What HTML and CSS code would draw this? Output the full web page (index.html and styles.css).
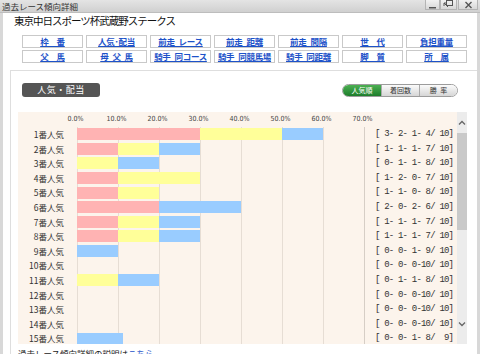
FILE: index.html
```html
<!DOCTYPE html>
<html lang="ja">
<head>
  <meta charset="UTF-8" />
  <title>過去レース傾向詳細</title>
  <link rel="stylesheet" href="styles.css">
</head>
<body>

  <div class="titlebar">
    <span class="titlebar-text">過去レース傾向詳細</span>
    <div class="win-btns">
      <span class="win-btn min">
        <svg width="9" height="8" viewBox="0 0 9 8"><rect x="1" y="6" width="7" height="1.5" fill="#555"/></svg>
      </span>
      <span class="win-btn restore">
        <svg width="11" height="9" viewBox="0 0 11 9" fill="none" stroke="#555" stroke-width="1">
          <rect x="3.5" y="0.5" width="6" height="5"/>
          <path d="M1 3 L5 7 M1 3 L1 6 M1 3 L4 3"/>
        </svg>
      </span>
      <span class="win-btn close">
        <svg width="9" height="8" viewBox="0 0 9 8" stroke="#555" stroke-width="1.4"><path d="M1.5 1 L7.5 7 M7.5 1 L1.5 7"/></svg>
      </span>
    </div>
  </div>

  <div class="window">
    <h1 class="race-name">東京中日スポーツ杯武蔵野ステークス</h1>

    <div class="tabs">
      <a href="#">枠　番</a>
      <a href="#">人気･配当</a>
      <a href="#">前走&ensp;レース</a>
      <a href="#">前走&ensp;距離</a>
      <a href="#">前走&ensp;間隔</a>
      <a href="#">世　代</a>
      <a href="#">負担重量</a>
      <a href="#">父　馬</a>
      <a href="#">母&ensp;父&ensp;馬</a>
      <a href="#">騎手&ensp;同コース</a>
      <a href="#">騎手&ensp;同競馬場</a>
      <a href="#">騎手&ensp;同距離</a>
      <a href="#">脚　質</a>
      <a href="#">所　属</a>
    </div>

    <div class="panel">
      <div class="panel-head">
        <span class="section-label">人気・配当</span>
        <div class="sort-btns">
          <span class="on">人気順</span>
          <span>着回数</span>
          <span>勝&ensp;率</span>
        </div>
      </div>

      <div class="chart-wrap">
        <div class="chart" id="chart">
          <div class="axis">
            <span class="axis-pad"></span>
            <div class="ticks">
              <span>0.0%</span><span>10.0%</span><span>20.0%</span><span>30.0%</span>
              <span>40.0%</span><span>50.0%</span><span>60.0%</span><span>70.0%</span>
            </div>
          </div>
        </div>
        <div class="scrollbar">
          <span class="sb-arrow">
            <svg width="8" height="5" viewBox="0 0 8 5" fill="none" stroke="#666" stroke-width="1.3"><path d="M1 4.5 L4 1.5 L7 4.5"/></svg>
          </span>
          <span class="sb-thumb"></span>
          <span class="sb-track"></span>
          <span class="sb-arrow down">
            <svg width="8" height="5" viewBox="0 0 8 5" fill="none" stroke="#666" stroke-width="1.3"><path d="M1 0.5 L4 3.5 L7 0.5"/></svg>
          </span>
        </div>
      </div>

      <p class="note">過去レース傾向詳細の説明は<a href="#">こちら</a></p>
    </div>
  </div>

  <script>
    // 1着-2着-3着-着外 / 出走数
    var rows = [
      [3, 2, 1, 4, 10], [1, 1, 1, 7, 10], [0, 1, 1, 8, 10], [1, 2, 0, 7, 10],
      [1, 1, 0, 8, 10], [2, 0, 2, 6, 10], [1, 1, 1, 7, 10], [1, 1, 1, 7, 10],
      [0, 0, 1, 9, 10], [0, 0, 0, 10, 10], [0, 1, 1, 8, 10], [0, 0, 0, 10, 10],
      [0, 0, 0, 10, 10], [0, 0, 0, 10, 10], [0, 0, 1, 8, 9]
    ];
    var unit = 4.1; // px per 1%
    var cls = ['win', 'second', 'third'];

    function pad(n, w) {
      var s = String(n);
      while (s.length < w) s = ' ' + s;
      return s;
    }

    var chart = document.getElementById('chart');
    rows.forEach(function (r, i) {
      var row = document.createElement('div');
      row.className = 'row';
      var bars = '';
      for (var k = 0; k < 3; k++) {
        if (r[k] > 0) {
          var w = (r[k] / r[4] * 100 * unit).toFixed(1);
          bars += '<span class="bar ' + cls[k] + '" style="width:' + w + 'px"></span>';
        }
      }
      row.innerHTML =
        '<span class="label">' + (i + 1) + '番人気</span>' +
        '<div class="bars">' + bars + '</div>' +
        '<span class="stats">[' + pad(r[0], 2) + '-' + pad(r[1], 2) + '-' + pad(r[2], 2) + '-' +
        pad(r[3], 2) + '/' + pad(r[4], 3) + ']</span>';
      chart.appendChild(row);
    });
  </script>

</body>
</html>
```

FILE: styles.css
```css
body {
  margin: 0;
  background: #fff;
  color: #222;
  font-family: "Noto Sans CJK JP", sans-serif;
  height: 354px;
  overflow: hidden;
}
.titlebar {
  height: 12px;
  background: linear-gradient(#e4e4e4, #d0d0d0);
  border-bottom: 1px solid #bdbdbd;
  display: flex;
  justify-content: space-between;
}
.titlebar-text {
  font-size: 8.5px;
  line-height: 12px;
  color: #333;
  padding-left: 2px;
}
.win-btns {
  display: flex;
  margin-right: 2px;
}
.win-btn {
  height: 10px;
  display: flex;
  align-items: center;
  justify-content: center;
  background: linear-gradient(#f2f2f2, #d8d8d8);
  border: 1px solid #b4b4b4;
  border-top: none;
  box-sizing: border-box;
}
.win-btn.min { width: 15px; }
.win-btn.restore { width: 17px; }
.win-btn.close { width: 20px; margin-left: 1px; }

.window {
  border-left: 3px solid #d8d8d8;
  border-right: 3px solid #d8d8d8;
  height: 341px;
}
.race-name {
  margin: 0;
  padding-left: 11px;
  font-size: 10.5px;
  line-height: 16px;
  letter-spacing: -1px;
  font-weight: normal;
  color: #111;
}
.tabs {
  display: grid;
  grid-template-columns: repeat(7, 61px);
  grid-auto-rows: 13px;
  column-gap: 3px;
  row-gap: 2px;
  margin: 6px 0 0 19px;
}
.tabs a {
  border: 1px solid #c9c9c9;
  box-sizing: border-box;
  text-align: center;
  font-size: 8.5px;
  line-height: 11px;
  font-weight: bold;
  letter-spacing: -0.3px;
  color: #1d52c9;
  text-decoration: underline;
  white-space: nowrap;
}

.panel {
  margin: 7px 0 0 7px;
  border: 1px solid #dedede;
  border-right: none;
  padding: 12px 5px 0 7px;
}
.panel-head {
  display: flex;
  justify-content: space-between;
  align-items: center;
  padding: 0 14px 0 4px;
}
.section-label {
  width: 78px;
  height: 14px;
  background: #555;
  border-radius: 3px;
  color: #fff;
  font-size: 9px;
  line-height: 14px;
  letter-spacing: 0.5px;
  text-align: center;
}
.sort-btns {
  display: flex;
  height: 13px;
  border: 1px solid #9c9c9c;
  border-radius: 7px;
  overflow: hidden;
  box-sizing: border-box;
}
.sort-btns span {
  width: 37px;
  font-size: 7px;
  line-height: 11px;
  text-align: center;
  color: #333;
  background: linear-gradient(#fbfbfb, #d6d6d6);
  border-left: 1px solid #aaa;
}
.sort-btns span.on {
  width: 38px;
  border-left: none;
  color: #fff;
  background: linear-gradient(#4cb052, #1d7d2b);
}

.chart-wrap {
  display: flex;
  height: 232px;
  margin-top: 15px;
  margin-right: 5px;
}
.chart {
  flex: 1;
  background: #fcf4ec;
  overflow: hidden;
}
.axis {
  display: flex;
  height: 15px;
}
.axis-pad {
  width: 37px;
}
.ticks {
  display: flex;
}
.ticks span {
  width: 41px;
  text-align: center;
  font-family: "Liberation Sans Narrow", "DejaVu Sans Condensed", "Liberation Sans", sans-serif;
  font-size: 7px;
  line-height: 15px;
  color: #444;
}
.row {
  display: flex;
  align-items: stretch;
  height: 14.6px;
}
.label {
  width: 46px;
  margin-right: 13px;
  text-align: right;
  font-size: 8.5px;
  line-height: 14.6px;
  color: #333;
}
.bars {
  width: 287px;
  display: flex;
  align-items: center;
  border-right: 1px solid #d6cec6;
  background: repeating-linear-gradient(to right, #e6ddd4 0 1px, transparent 1px 41px);
}
.bar {
  height: 12px;
}
.bar.win { background: #ffb3b3; }
.bar.second { background: #ffff99; }
.bar.third { background: #99ccff; }
.stats {
  padding-left: 10px;
  font-family: "Liberation Mono", monospace;
  font-size: 9px;
  letter-spacing: -0.8px;
  line-height: 14.6px;
  white-space: pre;
  color: #333;
}

.scrollbar {
  width: 10px;
  background: #ececec;
  display: flex;
  flex-direction: column;
}
.sb-arrow {
  height: 21px;
  display: flex;
  align-items: center;
  justify-content: center;
}
.sb-arrow.down {
  height: 26px;
  align-items: flex-start;
  padding-top: 4px;
  box-sizing: border-box;
}
.sb-thumb {
  height: 97px;
  background: #c9c9c9;
}
.sb-track {
  flex: 1;
}

.note {
  margin: 3px 0 0 0;
  font-size: 8.5px;
  line-height: 12px;
  color: #222;
}
.note a {
  color: #1d52c9;
  text-decoration: none;
}
```
